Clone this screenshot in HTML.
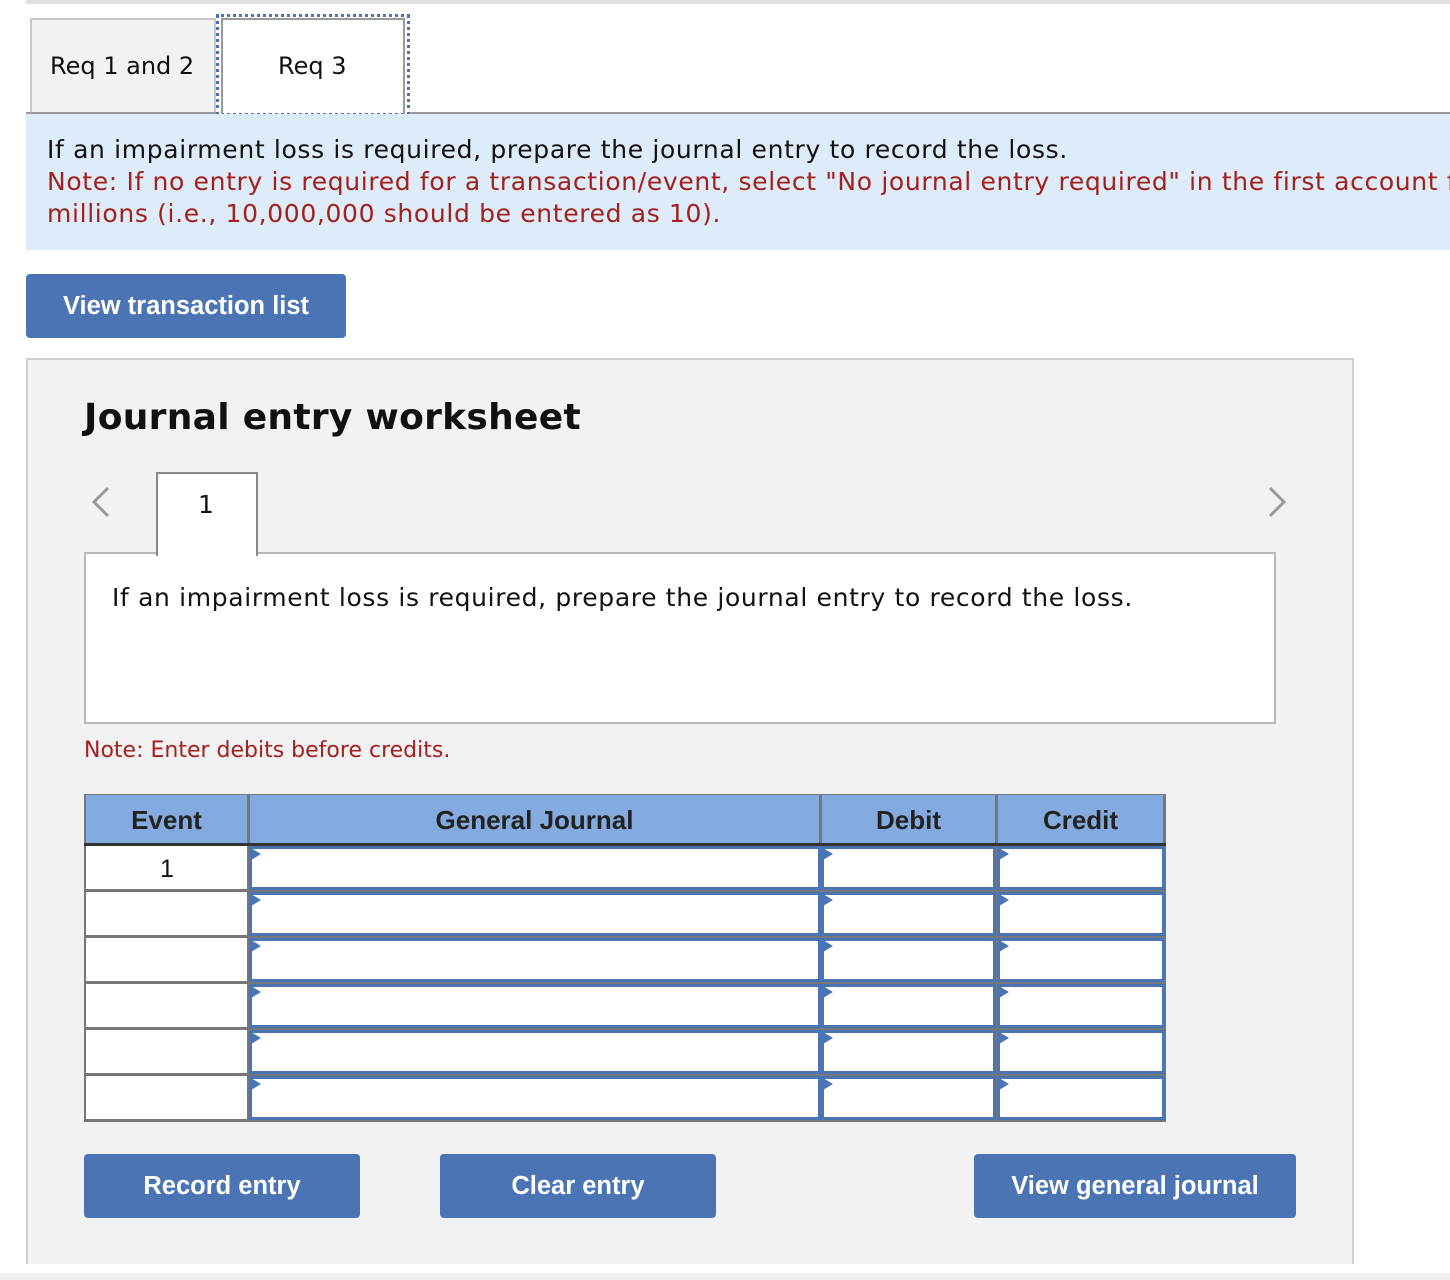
<!DOCTYPE html>
<html><head><meta charset="utf-8"><style>
*{box-sizing:border-box;margin:0;padding:0}
html,body{overflow:hidden}
body{width:1450px;height:1280px;background:#fff;position:relative;font-family:"DejaVu Sans",Verdana,sans-serif;color:#111}
.a{position:absolute}
.v{font-family:"DejaVu Sans",Verdana,sans-serif;font-size:20px;white-space:nowrap;line-height:1.2}
.t{font-size:25px;letter-spacing:0.65px}
.btn{position:absolute;background:#4a74b4;color:#fff;border-radius:4px;font-family:"Liberation Sans",Arial,sans-serif;font-weight:bold;font-size:25.5px;display:flex;align-items:center;justify-content:center}
.hd{position:absolute;top:795px;height:50px;background:#84abdf;font-family:"Liberation Sans",Arial,sans-serif;font-weight:bold;font-size:26px;display:flex;align-items:center;justify-content:center;color:#222}
.cell{position:absolute;background:#fff;border:3px solid #4a74b4}
.tri{position:absolute;width:0;height:0;border-top:6px solid transparent;border-bottom:6px solid transparent;border-left:10px solid #4a74b4}
</style></head><body>
<div class="a" style="left:26px;top:0;width:1424px;height:4px;background:#e0e0e0"></div>
<div class="a" style="left:30px;top:18px;width:186px;height:95px;background:#f2f2f2;border:2px solid #c8c8c8;border-bottom:none"></div>
<div class="a v" style="left:50px;top:52px;font-size:24px">Req 1 and 2</div>
<div class="a" style="left:216px;top:14px;width:194px;height:102px;border:3px dotted #4a74b4;background:#fff"></div>
<div class="a" style="left:221px;top:18px;width:184px;height:96px;border:2px solid #999;border-bottom:none"></div>
<div class="a v" style="left:278px;top:52px;font-size:24px">Req 3</div>
<div class="a" style="left:26px;top:112px;width:190px;height:2px;background:#999"></div>
<div class="a" style="left:410px;top:112px;width:1040px;height:2px;background:#999"></div>
<div class="a" style="left:26px;top:114px;width:1424px;height:136px;background:#deebf8;overflow:hidden">
<div class="a v t" style="left:21px;top:21px;color:#111">If an impairment loss is required, prepare the journal entry to record the loss.</div>
<div class="a v t" style="left:21px;top:53px;color:#a3201c">Note: If no entry is required for a transaction/event, select "No journal entry required" in the first account field.</div>
<div class="a v t" style="left:21px;top:85px;color:#a3201c">millions (i.e., 10,000,000 should be entered as 10).</div>
</div>
<div class="btn" style="left:26px;top:274px;width:320px;height:64px">View transaction list</div>
<div class="a" style="left:26px;top:358px;width:1328px;height:910px;background:#f2f2f2;border:2px solid #cfcfcf"></div>
<div class="a" style="left:84px;top:397px;font-family:'DejaVu Sans',Verdana,sans-serif;font-weight:bold;font-size:36px;color:#111;white-space:nowrap;letter-spacing:0.3px">Journal entry worksheet</div>
<svg class="a" style="left:90px;top:486px" width="22" height="32"><polyline points="18,2 4,16 18,30" fill="none" stroke="#999" stroke-width="3"/></svg>
<svg class="a" style="left:1266px;top:486px" width="22" height="32"><polyline points="4,2 18,16 4,30" fill="none" stroke="#999" stroke-width="3"/></svg>
<div class="a" style="left:84px;top:552px;width:1192px;height:172px;background:#fff;border:2px solid #b8b8b8"></div>
<div class="a" style="left:156px;top:472px;width:102px;height:84px;background:#fff;border:2px solid #888;border-bottom:none"></div>
<div class="a v" style="left:198px;top:490px;font-size:25px">1</div>
<div class="a v t" style="left:112px;top:583px">If an impairment loss is required, prepare the journal entry to record the loss.</div>
<div class="a v" style="left:84px;top:738px;font-size:22px;color:#a3201c">Note: Enter debits before credits.</div>
<div class="a" style="left:84px;top:794px;width:1082px;height:328px;background:#777"></div>
<div class="hd" style="left:86px;width:161px">Event</div>
<div class="hd" style="left:250px;width:569px">General Journal</div>
<div class="hd" style="left:822px;width:173px">Debit</div>
<div class="hd" style="left:998px;width:165px">Credit</div>
<div class="a" style="left:84px;top:843px;width:1082px;height:3px;background:#333"></div>
<div id="rows"></div>
<script>
var h='';for(var i=0;i<6;i++){var t=846+i*46;
h+='<div class="a" style="left:86px;top:'+t+'px;width:161px;height:43px;background:#fff"></div>';
if(i==0)h+='<div class="a v" style="left:160px;top:'+(t+8)+'px;font-family:Liberation Sans,Arial,sans-serif;font-size:25px">1</div>';
[[249,572],[821,175],[997,168]].forEach(function(c){h+='<div class="cell" style="left:'+c[0]+'px;top:'+t+'px;width:'+c[1]+'px;height:44px"></div><div class="tri" style="left:'+(c[0]+2)+'px;top:'+(t+2)+'px"></div>';});}
document.getElementById('rows').innerHTML=h;
</script>
<div class="btn" style="left:84px;top:1154px;width:276px;height:64px">Record entry</div>
<div class="btn" style="left:440px;top:1154px;width:276px;height:64px">Clear entry</div>
<div class="btn" style="left:974px;top:1154px;width:322px;height:64px">View general journal</div>
<div class="a" style="left:0;top:1264px;width:1450px;height:9px;background:#fff"></div>
<div class="a" style="left:0;top:1273px;width:1450px;height:7px;background:#eee"></div>
</body></html>
